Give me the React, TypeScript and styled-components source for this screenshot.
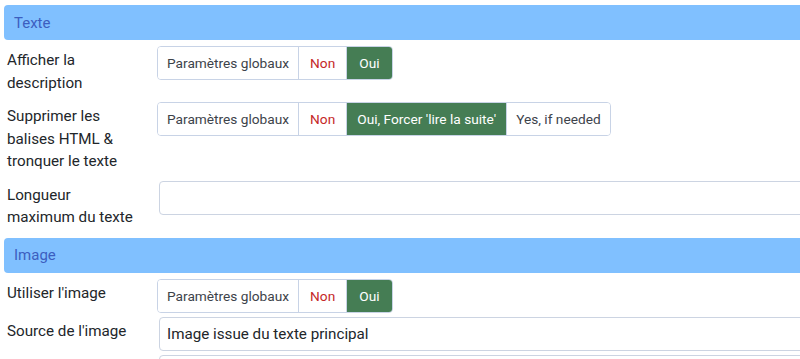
import React from "react";
import styled, {createGlobalStyle} from "styled-components";

const GlobalStyle = createGlobalStyle`
  body {
    margin: 0;
    background: #ffffff;
    overflow: hidden;
    font-family: Roboto, "Liberation Sans", sans-serif;
    color: #22262a;
  }
`;

const Page = styled.div`
  width: 1000px;
  padding: 5px 0 0 4px;
`;

const Section = styled.section`
  margin-bottom: 5px;
`;

const SectionHeader = styled.div`
  height: 35px;
  display: flex;
  align-items: center;
  padding-left: 10px;
  background: #80c0ff;
  border-radius: 4px 0 0 4px;
  color: #3c5ebf;
  font-size: 15px;
  margin-bottom: 6px;
`;

const Row = styled.div`
  display: flex;
  align-items: flex-start;
  margin-bottom: 4px;
`;

const Label = styled.label`
  flex: 0 0 153px;
  box-sizing: border-box;
  padding: 3px 24px 4px 3px;
  font-size: 15.2px;
  line-height: 22.5px;
  color: #22262a;
`;

const ButtonGroup = styled.div`
  display: inline-flex;
  height: 34px;
  border: 1px solid #c8d3e6;
  border-radius: 4px;
  box-sizing: border-box;
  overflow: hidden;
`;

type Tone = "neutral" | "danger" | "active";

const pad: Record<Tone, string> = {neutral: "9px", danger: "11px", active: "12px"};

const Segment = styled.span<{ $tone: Tone; $tight?: boolean }>`
  display: flex;
  align-items: center;
  padding: 0 ${p => (p.$tight ? "10px" : pad[p.$tone])};
  font-size: 13.7px;
  white-space: nowrap;
  background: ${p => (p.$tone === "active" ? "#457d54" : "#ffffff")};
  color: ${p => (p.$tone === "active" ? "#ffffff" : p.$tone === "danger" ? "#c52827" : "#3d434a")};
  & + & {
    border-left: 1px solid #c8d3e6;
  }
`;

const Input = styled.div`
  flex: 1;
  height: 34px;
  margin-left: 2px;
  box-sizing: border-box;
  border: 1px solid #ccd4e2;
  border-radius: 4px;
  display: flex;
  align-items: center;
  padding-left: 7px;
  font-size: 15.2px;
  color: #22262a;
`;

interface Option {
    text: string;
    tone: Tone;
    tight?: boolean;
}

const globalNonOui: Option[] = [
    {text: "Paramètres globaux", tone: "neutral"},
    {text: "Non", tone: "danger"},
    {text: "Oui", tone: "active"},
];

const Toggle: React.FC<{ options: Option[] }> = ({options}) => (
    <ButtonGroup>
        {options.map(o => (
            <Segment key={o.text} $tone={o.tone} $tight={o.tight}>{o.text}</Segment>
        ))}
    </ButtonGroup>
);

export default function App() {
    return (
        <Page>
            <GlobalStyle/>
            <Section>
                <SectionHeader>Texte</SectionHeader>
                <Row>
                    <Label>Afficher la description</Label>
                    <Toggle options={globalNonOui}/>
                </Row>
                <Row>
                    <Label>Supprimer les balises HTML &amp; tronquer le texte</Label>
                    <Toggle options={[
                        {text: "Paramètres globaux", tone: "neutral"},
                        {text: "Non", tone: "danger"},
                        {text: "Oui, Forcer 'lire la suite'", tone: "active", tight: true},
                        {text: "Yes, if needed", tone: "neutral"},
                    ]}/>
                </Row>
                <Row>
                    <Label>Longueur maximum du texte</Label>
                    <Input/>
                </Row>
            </Section>
            <Section>
                <SectionHeader>Image</SectionHeader>
                <Row>
                    <Label>Utiliser l'image</Label>
                    <Toggle options={globalNonOui}/>
                </Row>
                <Row>
                    <Label>Source de l'image</Label>
                    <Input>Image issue du texte principal</Input>
                </Row>
                <Row>
                    <Label/>
                    <Input/>
                </Row>
            </Section>
        </Page>
    );
}
